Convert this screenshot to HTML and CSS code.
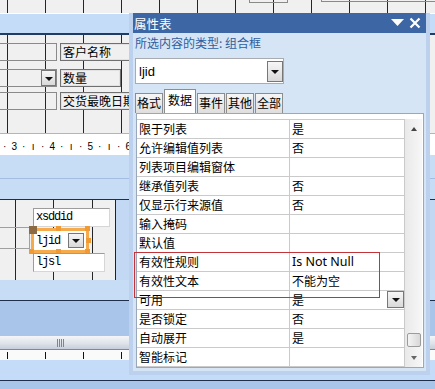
FILE: index.html
```html
<!DOCTYPE html>
<html lang="zh-CN">
<head>
  <meta charset="UTF-8" />
  <title>属性表</title>
  <link rel="stylesheet" href="styles.css">
</head>
<body>
  <!-- 窗体设计视图 -->
  <div class="designer">
    <div class="grid-top grid-lines">
      <div class="ctl ghost g1"></div>
      <div class="ctl ghost g2"></div>
    </div>
    <div class="section-bar"></div>

    <div class="header-sec grid-lines">
      <div class="ctl ghost h1"></div>
      <div class="ctl label l1">客户名称</div>
      <div class="ctl ghost h2"><span class="drop mini"><i class="tri"></i></span></div>
      <div class="ctl label l2">数量</div>
      <div class="ctl ghost h3"></div>
      <div class="ctl label l3">交货最晚日期</div>
    </div>

    <div class="ruler">
      <div class="marks">
        <span>·</span><span>3</span><span>·</span><span>ı</span>
        <span>·</span><span>4</span><span>·</span><span>ı</span>
        <span>·</span><span>5</span><span>·</span><span>ı</span>
        <span>·</span><span>6</span>
      </div>
    </div>
    <div class="bar-split"></div>

    <div class="detail-sec">
      <div class="detail-grid">
        <div class="ctl ghost d1"></div>
        <div class="ctl tb xsddid">xsddid</div>
        <div class="ctl sel">
          <span>ljid</span>
          <span class="drop cbtn"><i class="tri"></i></span>
        </div>
        <span class="hdl" style="left:56px;top:26px"></span>
        <span class="hdl" style="left:85px;top:26px"></span>
        <span class="hdl" style="left:86px;top:38px"></span>
        <span class="hdl" style="left:29px;top:49px"></span>
        <span class="hdl" style="left:56px;top:49px"></span>
        <span class="hdl" style="left:85px;top:49px"></span>
        <span class="move"></span>
        <div class="ctl tb ljsl">ljsl</div>
      </div>
    </div>

    <div class="bar-b"></div>
    <div class="bar-c"></div>
    <div class="hscroll"><span class="grip"></span></div>
    <div class="ruler-bottom"></div>
    <div class="bar-d"></div>
    <div class="bar-e"></div>
  </div>

  <!-- 属性表 浮动窗格 -->
  <div class="sheet">
    <div class="sheet-title">
      <span>属性表</span>
      <span class="title-tools">
        <svg width="13" height="8" viewBox="0 0 13 8"><polygon points="0,0 13,0 6.5,7" fill="#fff"/></svg>
        <svg width="12" height="12" viewBox="0 0 12 12"><path d="M1.5 1.5 L10.5 10.5 M10.5 1.5 L1.5 10.5" stroke="#fff" stroke-width="2.2"/></svg>
      </span>
    </div>
    <div class="sheet-body">
      <div class="sel-type">所选内容的类型: 组合框</div>
      <div class="combo">
        <span>ljid</span>
        <span class="drop cbtn big"><i class="tri"></i></span>
      </div>
      <div class="tabs">
        <div class="tab">格式</div>
        <div class="tab active">数据</div>
        <div class="tab">事件</div>
        <div class="tab">其他</div>
        <div class="tab">全部</div>
      </div>
      <div class="props">
        <div class="rows">
          <div class="row"><div class="name">限于列表</div><div class="val">是</div></div>
          <div class="row"><div class="name">允许编辑值列表</div><div class="val">否</div></div>
          <div class="row"><div class="name">列表项目编辑窗体</div><div class="val"></div></div>
          <div class="row"><div class="name">继承值列表</div><div class="val">否</div></div>
          <div class="row"><div class="name">仅显示行来源值</div><div class="val">否</div></div>
          <div class="row"><div class="name">输入掩码</div><div class="val"></div></div>
          <div class="row"><div class="name">默认值</div><div class="val"></div></div>
          <div class="row"><div class="name">有效性规则</div><div class="val latin">Is Not Null</div></div>
          <div class="row"><div class="name">有效性文本</div><div class="val">不能为空</div></div>
          <div class="row"><div class="name">可用</div><div class="val">是<span class="drop rbtn"><i class="tri"></i></span></div></div>
          <div class="row"><div class="name">是否锁定</div><div class="val">否</div></div>
          <div class="row"><div class="name">自动展开</div><div class="val">是</div></div>
          <div class="row"><div class="name">智能标记</div><div class="val"></div></div>
        </div>
        <div class="vscroll">
          <span class="arrow up"></span>
          <span class="thumb"></span>
          <span class="arrow down"></span>
        </div>
      </div>
    </div>
    <div class="highlight"></div>
  </div>
</body>
</html>
```

FILE: styles.css
```css
/* ---------- 基本设置 ---------- */
* {
  box-sizing: border-box;
}
body {
  margin: 0;
  width: 435px;
  height: 389px;
  overflow: hidden;
  position: relative;
  font-family: "Noto Sans CJK SC", "Noto Sans", sans-serif;
  font-size: 12px;
  color: #000;
  background: #f0f0f0;
}

/* ---------- 设计视图背景 ---------- */
.designer {
  display: flex;
  flex-direction: column;
  height: 389px;
}
.grid-lines {
  background-color: #f0f0f0;
  background-image: repeating-linear-gradient(to right, transparent 0 7px, #262626 7px 8px, transparent 8px 38px);
}
.grid-top {
  height: 14px;
  border-bottom: 1px solid #fff;
  position: relative;
  overflow: hidden;
}
.section-bar {
  height: 21px;
  background: #c4dcf8;
  border-bottom: 2px solid #213c63;
}
.header-sec {
  height: 98px;
  position: relative;
  overflow: hidden;
}
.ruler {
  height: 22px;
  border-top: 1px solid #9db9df;
  background: #fff;
  padding-top: 4px;
  font-family: "Liberation Sans", sans-serif;
  font-size: 10px;
}
.marks {
  width: 133px;
  height: 100%;
  display: flex;
  align-items: center;
}
.marks span {
  width: 9.5px;
  flex: none;
  text-align: center;
}
.bar-split {
  height: 45px;
  border-bottom: 1px solid #1d2f4d;
  background: linear-gradient(to bottom, #c7dcf5 0 23px, #a3bee2 23px 24px, #c7dcf5 24px);
}
.detail-sec {
  height: 80px;
  display: flex;
  background: #c3d8f2;
}
.detail-grid {
  width: 116px;
  border-right: 1px solid #222;
  position: relative;
  overflow: hidden;
  background-color: #f0f0f0;
  background-image: repeating-linear-gradient(to right, transparent 0 15px, #262626 15px 16px, transparent 16px 38.5px);
}
.bar-b {
  height: 21px;
  background: #c7dcf5;
  border-bottom: 1px solid #1d2f4d;
}
.bar-c {
  height: 34px;
  background: #a9c5ea;
}
.hscroll {
  height: 15px;
  background: linear-gradient(to bottom, #f4f6f9, #dfe4ea 55%, #c6ced9);
  border-top: 1px solid #b7c3d3;
  border-bottom: 1px solid #7d8898;
  display: flex;
  align-items: center;
  padding-left: 57px;
}
.grip {
  width: 8px;
  height: 8px;
  background: repeating-linear-gradient(to right, #7a8595 0 1px, transparent 1px 2px);
}
.ruler-bottom {
  height: 10px;
  background-color: #fafafa;
  background-image: repeating-linear-gradient(to right, transparent 0 7px, #111 7px 8px, transparent 8px 38px);
  background-size: 100% 7px;
  background-position: 0 2px;
  background-repeat: no-repeat;
}
.bar-d {
  height: 21px;
  background: #c4dcf8;
  border-bottom: 1px solid #1d2f4d;
}
.bar-e {
  flex: 1;
  background: #a9c5ea;
}

/* ---------- 设计视图中的控件 ---------- */
.ctl {
  position: absolute;
}
.ghost {
  border: 1px solid #8a8a8a;
}
.g1 { left: 249px; top: -6px; width: 39px; height: 9px; }
.g2 { left: 321px; top: -6px; width: 130px; height: 8px; }
.h1 { left: -10px; top: 8px; width: 67px; height: 18px; }
.h2 { left: -10px; top: 34px; width: 67px; height: 18px; }
.h3 { left: -10px; top: 57px; width: 67px; height: 18px; }
.d1 { left: -10px; top: 27px; width: 40px; height: 22px; border-color: #a0a0a0; }
.label {
  background: #f0f0f0;
  border: 1px solid #707070;
  box-shadow: inset 0 0 0 1px #e2e2e2;
  padding-left: 2px;
  line-height: 16px;
  white-space: nowrap;
  overflow: hidden;
  height: 18px;
}
.l1 { left: 60px; top: 8px; width: 80px; }
.l2 { left: 60px; top: 34px; width: 61px; }
.l3 { left: 60px; top: 57px; width: 80px; }
.tb {
  background: #fff;
  border: 1px solid #9c9c9c;
  border-right-color: #d6d6d6;
  border-bottom-color: #d6d6d6;
  font-family: "Liberation Mono", monospace;
  font-size: 12px;
  letter-spacing: -1.2px;
  padding-left: 2px;
  line-height: 17px;
  height: 19px;
}
.xsddid { left: 33px; top: 8px; width: 77px; }
.ljsl { left: 33px; top: 53px; width: 72px; }
.sel {
  left: 31px;
  top: 28px;
  width: 58px;
  height: 25px;
  border: 3px solid #f5aa4c;
  background: #fff;
  display: flex;
  align-items: center;
  padding-left: 2px;
  font-family: "Liberation Mono", monospace;
  font-size: 12px;
  letter-spacing: -1.2px;
}
.hdl {
  position: absolute;
  width: 5px;
  height: 5px;
  background: #f09a33;
}
.move {
  position: absolute;
  left: 29px;
  top: 26px;
  width: 8px;
  height: 8px;
  background: #8b6a44;
}

/* 下拉按钮 */
.drop {
  display: flex;
  align-items: center;
  justify-content: center;
  background: linear-gradient(to bottom, #f6f6f6, #d9d9d9);
  border: 1px solid #777;
}
.tri {
  width: 0;
  height: 0;
  border-left: 4px solid transparent;
  border-right: 4px solid transparent;
  border-top: 4px solid #111;
  margin-top: 1px;
}
.mini {
  position: absolute;
  left: 50px;
  top: 0;
  width: 15px;
  height: 16px;
}
.cbtn {
  margin-left: auto;
  margin-right: 2px;
  width: 16px;
  height: 15px;
  letter-spacing: 0;
}

/* ---------- 属性表 ---------- */
.sheet {
  position: absolute;
  left: 129px;
  top: 13px;
  width: 301px;
  height: 362px;
  border: 4px solid #bcd1ee;
  border-top: 0;
  background: #d6e5f6;
}
.sheet-title {
  height: 20px;
  background: #3c67a4;
  color: #fff;
  font-size: 12.5px;
  display: flex;
  align-items: center;
  justify-content: space-between;
  padding: 0 5px 0 1px;
}
.title-tools {
  display: flex;
  align-items: center;
  gap: 5px;
}
.sheet-body {
  padding: 0 2px;
}
.sel-type {
  margin-top: 2px;
  height: 16px;
  line-height: 16px;
  color: #2f5e9e;
}
.combo {
  margin-top: 7px;
  width: 149px;
  height: 26px;
  background: #fff;
  border: 1px solid #a9abb2;
  display: flex;
  align-items: center;
  padding-left: 3px;
  font-family: "Liberation Sans", sans-serif;
  font-size: 13px;
}
.combo .big {
  width: 16px;
  height: 21px;
  margin-right: 0;
}
.tabs {
  margin-top: 5px;
  height: 24px;
  display: flex;
  align-items: flex-end;
  gap: 1px;
}
.tab {
  height: 20px;
  padding: 0 1px;
  border: 1px solid #8d8d8d;
  border-bottom: 0;
  background: linear-gradient(to bottom, #f6f6f6, #dedede);
  line-height: 18px;
}
.tab.active {
  height: 24px;
  padding: 0 3px;
  background: #fff;
  line-height: 20px;
}
.props {
  margin-left: 1px;
  width: 288px;
  height: 255px;
  border: 1px solid #9aa8bb;
  background: #fff;
  padding-top: 5px;
  display: flex;
}
.rows {
  width: 268px;
  border-top: 1px solid #cacaca;
  border-right: 1px solid #cacaca;
}
.row {
  height: 19px;
  border-bottom: 1px solid #cacaca;
  display: flex;
  line-height: 18px;
}
.name {
  width: 153px;
  border-right: 1px solid #cacaca;
  padding-left: 2px;
  white-space: nowrap;
}
.val {
  flex: 1;
  padding-left: 2px;
  display: flex;
}
.latin {
  font-family: "Noto Sans", sans-serif;
  font-size: 12.5px;
}
.rbtn {
  margin-left: auto;
  width: 17px;
  height: 17px;
}
.vscroll {
  width: 17px;
  display: flex;
  flex-direction: column;
  align-items: center;
  background: linear-gradient(to right, #e9e9e9, #f7f7f7);
}
.arrow {
  width: 0;
  height: 0;
  border-left: 3.5px solid transparent;
  border-right: 3.5px solid transparent;
}
.arrow.up {
  margin-top: 8px;
  border-bottom: 4px solid #444;
}
.arrow.down {
  margin-top: 9px;
  border-top: 4px solid #666;
}
.thumb {
  margin-top: auto;
  width: 14px;
  height: 14px;
  border: 1px solid #9c9c9c;
  border-radius: 2px;
  background: linear-gradient(to right, #f4f4f4, #d8d8d8);
}
.vscroll .arrow.down {
  margin-bottom: 7px;
}
.highlight {
  position: absolute;
  left: 1px;
  top: 239px;
  width: 246px;
  height: 46px;
  border: 1px solid #c3343a;
}
```
